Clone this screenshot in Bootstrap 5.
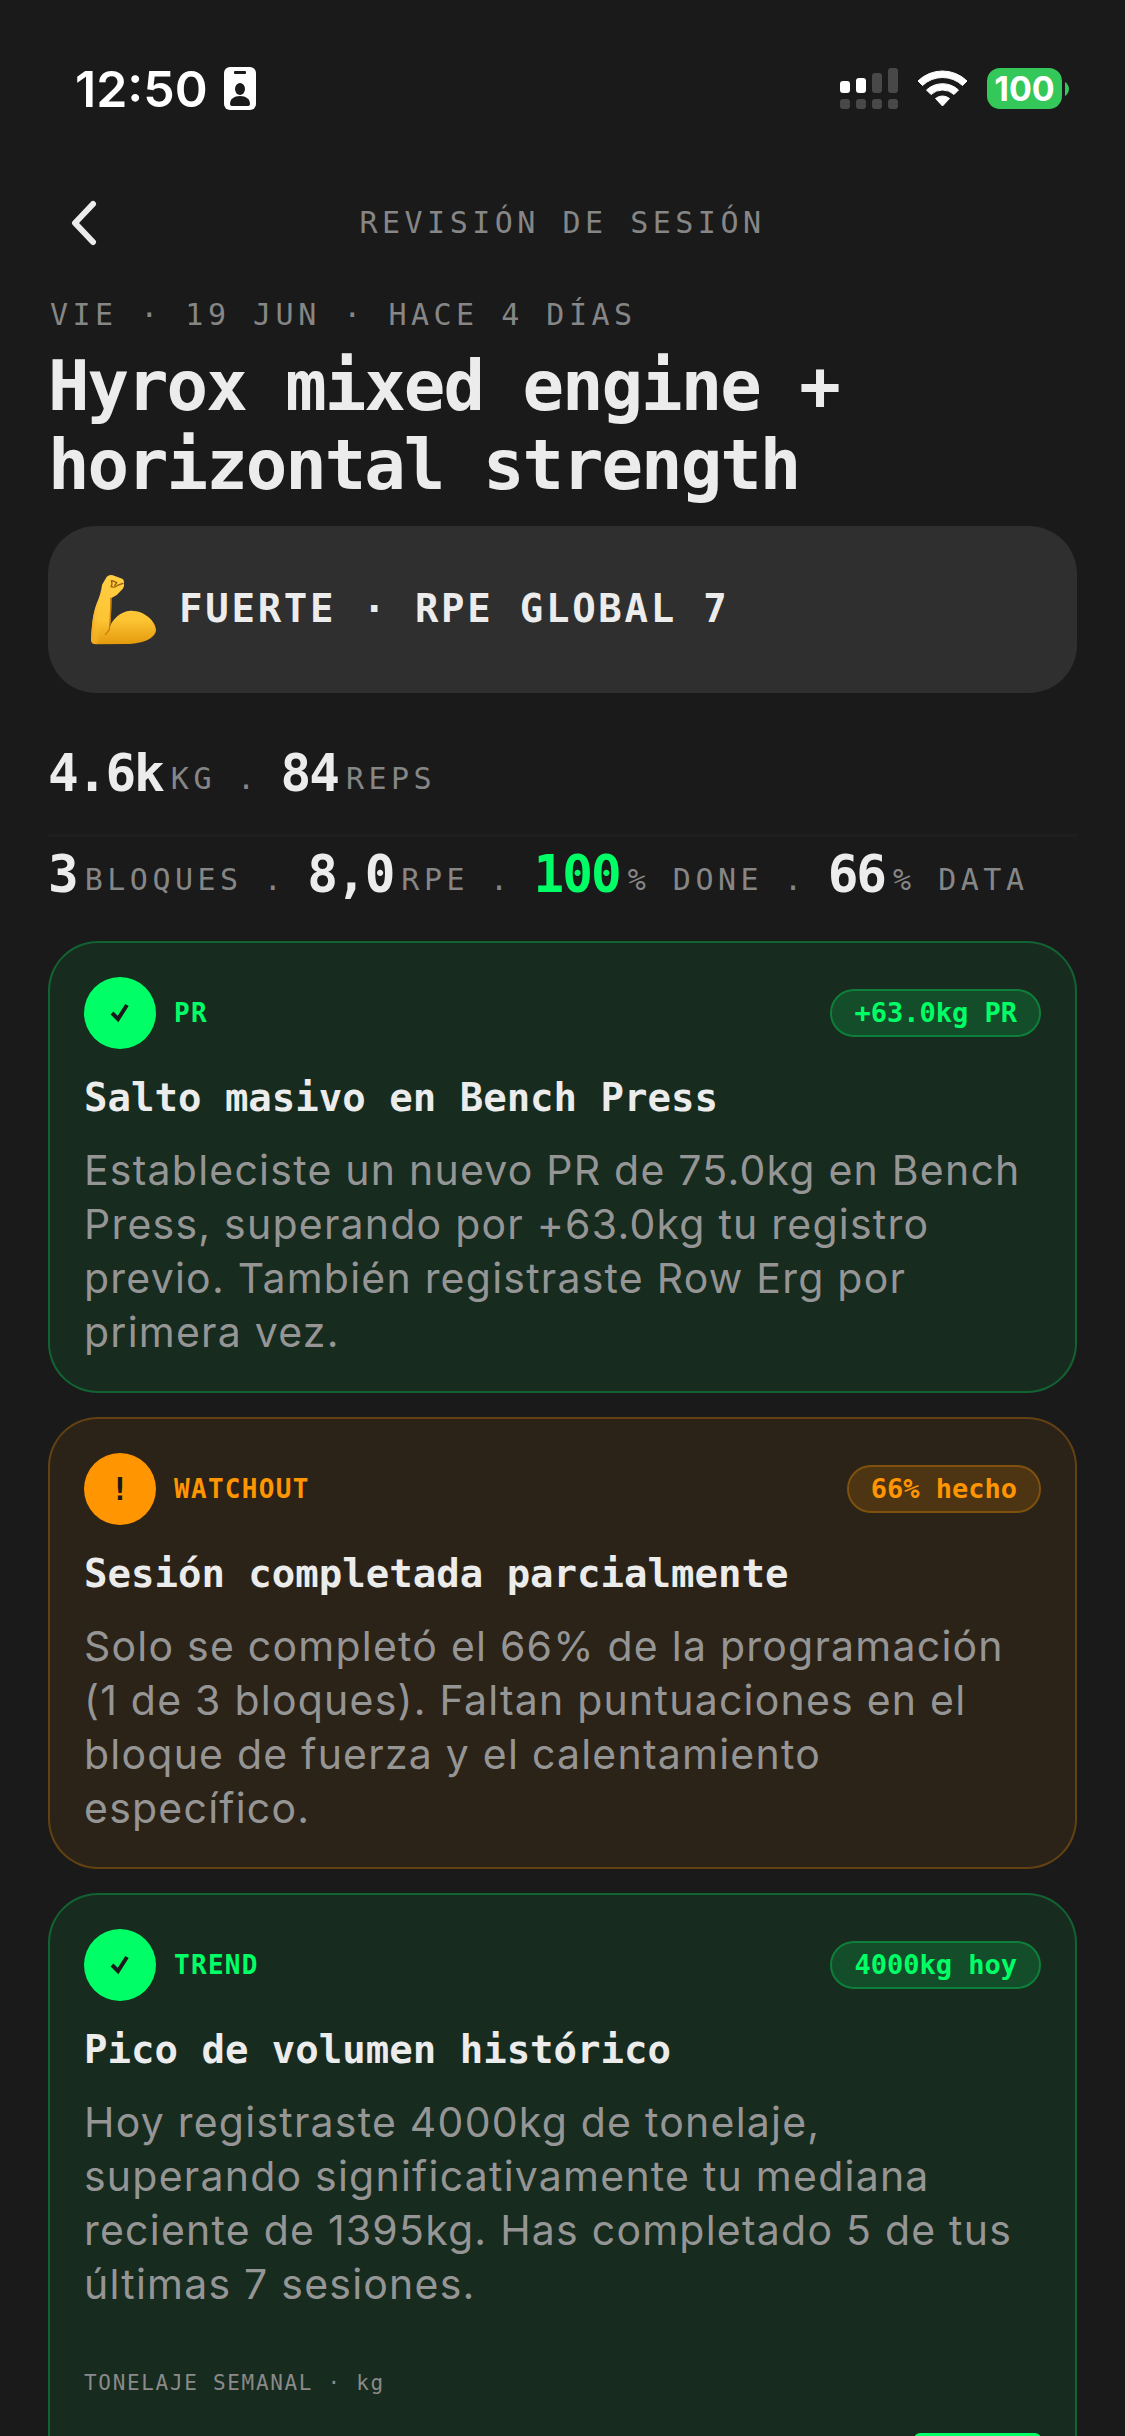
<!DOCTYPE html>
<html lang="es" data-bs-theme="dark">
<head>
<meta charset="utf-8">
<meta name="viewport" content="width=device-width, initial-scale=1">
<title>Revisión de sesión</title>
<link rel="stylesheet" href="https://cdn.jsdelivr.net/npm/bootstrap@5.3.0/dist/css/bootstrap.min.css">
<style>
  :root { --ink: #ececec; --muted: #868686; --go: #00ff66; --warn: #ff9500; }
  body { background: #1a1a1a; color: var(--ink); font-family: "DejaVu Sans Mono", "Liberation Mono", monospace; }
  .screen { padding: 0 48px; }
  .status-bar { padding: 59px 8px 0 27px; height: 175px; font-family: Inter, "Liberation Sans", sans-serif; }
  .clock { font-size: 50px; line-height: 60px; font-weight: 600; color: #fff; }
  .radios { padding-top: 9px; gap: 19px; }
  .battery { width: 75px; height: 41px; border-radius: 13px; background: #34c759; color: #fff; font-size: 34px; line-height: 41px; font-weight: 700; }
  .top-nav { height: 96px; margin-bottom: 24px; }
  .nav-side { width: 72px; height: 96px; }
  .label-text { font-size: 30px; line-height: 40px; letter-spacing: .15em; color: var(--muted); font-weight: 400; }
  .session-date { padding-left: 2px; }
  .session-title { color: var(--ink); font-size: 69px; line-height: 79px; letter-spacing: -2px; font-weight: 700; margin: 12px 0 21px; }
  .effort { background: #2f2f2f; border-radius: 48px; height: 167px; padding: 0 42px; gap: 22px; margin-bottom: 51px; font-size: 39px; letter-spacing: .07em; font-weight: 700; }
  .stat-row { gap: 21px; }
  .stat-row.is-first { padding-bottom: 30px; border-bottom: 3px solid #1e1e1e; margin-bottom: 8px; }
  .stat-item { gap: 8px; }
  .stat-num { font-size: 51px; line-height: 60px; letter-spacing: -2px; font-weight: 700; }
  .stat-unit { line-height: 50px; }
  .is-go { color: var(--go); }
  .insights { gap: 24px; margin-top: 36px; }
  .insight { --tone: var(--go); --tone-rgb: 0, 255, 102; border: 2px solid rgba(var(--tone-rgb), .32); background: rgba(var(--tone-rgb), .08); background-clip: padding-box; border-radius: 50px; padding: 34px 34px 32px; }
  .insight.is-warn { --tone: var(--warn); --tone-rgb: 255, 149, 0; }
  .insight-head { gap: 18px; margin-bottom: 25px; }
  .insight-dot { width: 72px; height: 72px; background: var(--tone); color: #1a1a1a; font-size: 32px; font-weight: 700; }
  .insight-kind { font-size: 26px; line-height: 30px; letter-spacing: .05em; font-weight: 700; color: var(--tone); }
  .insight-tag { height: 48px; padding: 0 22px; border: 2px solid rgba(var(--tone-rgb), .4); background: rgba(var(--tone-rgb), .16); background-clip: padding-box; color: var(--tone); font-size: 27px; font-weight: 700; }
  .insight-title { color: var(--ink); font-size: 39px; line-height: 48px; font-weight: 700; margin: 0 0 21px; }
  .insight-body { font-family: Inter, "Liberation Sans", sans-serif; font-size: 41px; line-height: 54px; letter-spacing: .03em; color: #959595; margin: 0; }
  .chart-label { font-size: 21px; line-height: 28px; letter-spacing: .08em; color: #8a8a8a; margin: 58px 0 36px; }
  .chart-bars { height: 180px; gap: 11px; }
  .chart-bar { border-radius: 6px; background: rgba(0, 255, 102, .4); }
  .chart-bar.is-now { background: var(--go); }
</style>
</head>
<body>
<div class="screen vh-100 overflow-hidden">
  <div class="status-bar d-flex justify-content-between align-items-start">
    <div class="d-flex align-items-center gap-3">
      <span class="clock">12:50</span>
      <svg width="33" height="46" viewBox="0 0 33 46" aria-hidden="true"><rect width="32" height="43" y="1" rx="6" fill="#fff"/><rect x="10" y="5" width="12" height="3" rx="1" fill="#1a1a1a"/><ellipse cx="16" cy="23" rx="5" ry="6" fill="#1a1a1a"/><path d="M6 38c0-5 4-8 10-8s10 3 10 8c0 1-1 2-2 2H8c-1 0-2-1-2-2z" fill="#1a1a1a"/></svg>
    </div>
    <div class="radios d-flex align-items-center">
      <svg width="58" height="41" viewBox="0 0 58 41" aria-hidden="true"><g fill="#fff"><rect y="13" width="10" height="12" rx="3"/><rect x="16" y="10" width="10" height="15" rx="3"/></g><g fill="#484848"><rect x="32" y="5" width="10" height="20" rx="3"/><rect x="48" width="10" height="25" rx="3"/><rect y="31" width="10" height="10" rx="3"/><rect x="16" y="31" width="10" height="10" rx="3"/><rect x="32" y="31" width="10" height="10" rx="3"/><rect x="48" y="31" width="10" height="10" rx="3"/></g></svg>
      <svg width="51" height="37" viewBox="0 0 51 37" aria-hidden="true"><g fill="#fff" stroke="#fff" stroke-width="1" stroke-linejoin="round"><path d="M1 11A35 35 0 0 1 50 11L45.500 15.500A29 29 0 0 0 5.500 15.500Z"/><path d="M9.500 20A23.500 23.500 0 0 1 41.500 20L37 24.500A17 17 0 0 0 14 24.500Z"/><path d="M18.500 28.500A11 11 0 0 1 32.500 28.500L25.500 36Z"/></g></svg>
      <div class="d-flex align-items-center">
        <span class="battery text-center">100</span>
        <svg width="7" height="14" viewBox="0 0 7 14" aria-hidden="true"><path d="M3 0v14c2-1 4-4 4-7s-2-6-4-7z" fill="#34c759"/></svg>
      </div>
    </div>
  </div>

  <nav class="top-nav d-flex align-items-center justify-content-between">
    <button type="button" class="nav-side btn border-0 p-0 d-flex align-items-center justify-content-center" aria-label="Volver">
      <svg width="28" height="46" viewBox="0 0 28 46" fill="none" aria-hidden="true"><path d="M23 4L5 23l18 19" stroke="#ececec" stroke-width="6" stroke-linecap="round" stroke-linejoin="round"/></svg>
    </button>
    <h1 class="label-text m-0">REVISIÓN DE SESIÓN</h1>
    <span class="nav-side"></span>
  </nav>

  <main>
    <div class="label-text session-date">VIE · 19 JUN · HACE 4 DÍAS</div>
    <h2 class="session-title">Hyrox mixed engine + horizontal strength</h2>

    <div class="effort d-flex align-items-center">
      <svg width="67" height="71" viewBox="30 40 200 212" aria-hidden="true">
        <defs>
          <linearGradient id="skin" x1="0" y1="0" x2="0" y2="1"><stop offset="0" stop-color="#ffcf45"/><stop offset=".65" stop-color="#fdc433"/><stop offset="1" stop-color="#e39a0c"/></linearGradient>
          <linearGradient id="forearm" x1="0" y1="0" x2="1" y2="0"><stop offset="0" stop-color="#f2a81c"/><stop offset=".45" stop-color="#ffcb41" stop-opacity="0"/></linearGradient>
        </defs>
        <path d="M66 72L80 48Q88 41 98 44L126 54Q133 58 131 68Q134 76 128 84L110 103L94 112C93 150 93 178 89 198C98 174 122 152 150 150C192 148 227 182 227 208C225 234 182 249 140 249L50 250Q31 250 33 234C36 190 38 160 50 128Q63 98 66 72Z" fill="url(#skin)"/>
        <path d="M66 72C63 98 62 98 50 128C38 160 36 190 33 234Q31 250 50 250L88 200L94 112Z" fill="url(#forearm)"/>
        <path d="M92 112C93 150 90 180 88 204Q84 214 76 220" fill="none" stroke="#c77d06" stroke-width="4" stroke-linecap="round"/>
        <path d="M94 60Q98 70 93 78Q104 82 112 74L128 68M96 60L110 66L104 74" fill="none" stroke="#9a5a08" stroke-width="4" stroke-linecap="round" stroke-linejoin="round"/>
      </svg>
      <span>FUERTE · RPE GLOBAL 7</span>
    </div>

    <div class="stat-row is-first d-flex align-items-end">
      <div class="stat-item d-flex align-items-end"><span class="stat-num">4.6k</span><span class="label-text stat-unit">KG</span></div>
      <span class="label-text stat-unit">.</span>
      <div class="stat-item d-flex align-items-end"><span class="stat-num">84</span><span class="label-text stat-unit">REPS</span></div>
    </div>
    <div class="stat-row d-flex align-items-end">
      <div class="stat-item d-flex align-items-end"><span class="stat-num">3</span><span class="label-text stat-unit">BLOQUES</span></div>
      <span class="label-text stat-unit">.</span>
      <div class="stat-item d-flex align-items-end"><span class="stat-num">8,0</span><span class="label-text stat-unit">RPE</span></div>
      <span class="label-text stat-unit">.</span>
      <div class="stat-item d-flex align-items-end"><span class="stat-num is-go">100</span><span class="label-text stat-unit text-nowrap">% DONE</span></div>
      <span class="label-text stat-unit">.</span>
      <div class="stat-item d-flex align-items-end"><span class="stat-num">66</span><span class="label-text stat-unit text-nowrap">% DATA</span></div>
    </div>

    <div class="insights d-flex flex-column">
      <article class="insight">
        <div class="insight-head d-flex align-items-center">
          <span class="insight-dot rounded-circle d-flex align-items-center justify-content-center"><svg width="22" height="22" viewBox="0 0 22 22" fill="none" aria-hidden="true"><path d="M3 11l6 6L18 3" stroke="#1a1a1a" stroke-width="4"/></svg></span>
          <span class="insight-kind">PR</span>
          <span class="insight-tag rounded-pill d-flex align-items-center ms-auto">+63.0kg PR</span>
        </div>
        <h3 class="insight-title">Salto masivo en Bench Press</h3>
        <p class="insight-body">Estableciste un nuevo PR de 75.0kg en Bench Press, superando por +63.0kg tu registro previo. También registraste Row Erg por primera vez.</p>
      </article>

      <article class="insight is-warn">
        <div class="insight-head d-flex align-items-center">
          <span class="insight-dot rounded-circle d-flex align-items-center justify-content-center">!</span>
          <span class="insight-kind">WATCHOUT</span>
          <span class="insight-tag rounded-pill d-flex align-items-center ms-auto">66% hecho</span>
        </div>
        <h3 class="insight-title">Sesión completada parcialmente</h3>
        <p class="insight-body">Solo se completó el 66% de la programación (1 de 3 bloques). Faltan puntuaciones en el bloque de fuerza y el calentamiento específico.</p>
      </article>

      <article class="insight">
        <div class="insight-head d-flex align-items-center">
          <span class="insight-dot rounded-circle d-flex align-items-center justify-content-center"><svg width="22" height="22" viewBox="0 0 22 22" fill="none" aria-hidden="true"><path d="M3 11l6 6L18 3" stroke="#1a1a1a" stroke-width="4"/></svg></span>
          <span class="insight-kind">TREND</span>
          <span class="insight-tag rounded-pill d-flex align-items-center ms-auto">4000kg hoy</span>
        </div>
        <h3 class="insight-title">Pico de volumen histórico</h3>
        <p class="insight-body">Hoy registraste 4000kg de tonelaje, superando significativamente tu mediana reciente de 1395kg. Has completado 5 de tus últimas 7 sesiones.</p>
        <div class="chart-label">TONELAJE SEMANAL · kg</div>
        <div class="chart-bars d-flex align-items-end">
          <span class="chart-bar flex-fill" style="height:20%"></span>
          <span class="chart-bar flex-fill" style="height:35%"></span>
          <span class="chart-bar flex-fill" style="height:30%"></span>
          <span class="chart-bar flex-fill" style="height:40%"></span>
          <span class="chart-bar flex-fill" style="height:25%"></span>
          <span class="chart-bar flex-fill" style="height:35%"></span>
          <span class="chart-bar is-now flex-fill" style="height:100%"></span>
        </div>
      </article>
    </div>
  </main>
</div>
<script src="https://cdn.jsdelivr.net/npm/bootstrap@5.3.0/dist/js/bootstrap.bundle.min.js"></script>
</body>
</html>
